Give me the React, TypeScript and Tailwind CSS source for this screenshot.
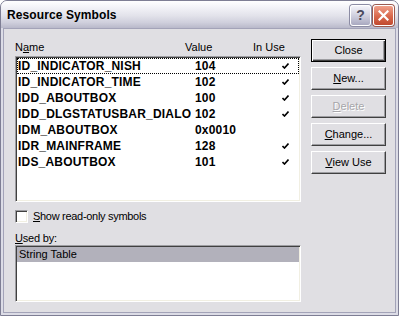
import type { ReactNode } from 'react';

type Row = { name: string; value: string; used: boolean };

const rows: Row[] = [
  { name: 'ID_INDICATOR_NISH', value: '104', used: true },
  { name: 'ID_INDICATOR_TIME', value: '102', used: true },
  { name: 'IDD_ABOUTBOX', value: '100', used: true },
  { name: 'IDD_DLGSTATUSBAR_DIALOG', value: '102', used: true },
  { name: 'IDM_ABOUTBOX', value: '0x0010', used: false },
  { name: 'IDR_MAINFRAME', value: '128', used: true },
  { name: 'IDS_ABOUTBOX', value: '101', used: true },
];

const sunken =
  'border border-t-[#9d9da1] border-l-[#9d9da1] border-r-white border-b-white shadow-[inset_1px_1px_0_#404040,inset_-1px_-1px_0_#f1efe2]';

function Check() {
  return (
    <svg width="7" height="6" viewBox="0 0 7 6" className="block">
      <path d="M0.5 3 L2.5 5 L6.5 0.5" fill="none" stroke="#000" strokeWidth="1.6" />
    </svg>
  );
}

function Key({ children }: { children: ReactNode }) {
  return <span className="underline underline-offset-[1px]">{children}</span>;
}

function Btn({ children, def, disabled }: { children: ReactNode; def?: boolean; disabled?: boolean }) {
  const frame = def
    ? 'border border-black shadow-[inset_1px_1px_0_#fff,inset_-1px_-1px_0_#404040,inset_-2px_-2px_0_#9d9da1]'
    : 'border border-t-white border-l-white border-r-[#404040] border-b-[#404040] shadow-[inset_-1px_-1px_0_#9d9da1]';
  return (
    <div
      className={`w-[75px] h-[23px] flex items-center justify-center bg-[#e0dfe3] text-[11px] ${frame} ${
        disabled ? 'text-[#a7a6aa] [text-shadow:1px_1px_0_#fff]' : 'text-black'
      }`}
    >
      <span>{children}</span>
    </div>
  );
}

function TitleBar() {
  return (
    <div className="h-[27px] flex items-center justify-between pl-[6px] pr-[4px] pt-[1px] bg-[linear-gradient(to_bottom,#ffffff_0%,#f2f2f7_25%,#e2e2ea_55%,#cfcfdc_80%,#b9b9ca_100%)]">
      <span className="text-[12px] font-bold text-black tracking-[0.1px]">Resource Symbols</span>
      <div className="flex gap-[2px]">
        <div className="w-[21px] h-[21px] rounded-[3px] border border-white shadow-[0_0_0_1px_#8c8ca4] bg-[linear-gradient(to_bottom,#f4f4fa,#c9c9d9_60%,#a9a9c0)] flex items-center justify-center">
          <span className="text-[14px] font-bold text-[#4a4a5c] leading-none">?</span>
        </div>
        <div className="w-[21px] h-[21px] rounded-[3px] border border-white shadow-[0_0_0_1px_#9a5a50] bg-[linear-gradient(to_bottom,#f0a08a,#d8684c_55%,#c04a30)] flex items-center justify-center">
          <svg width="11" height="11" viewBox="0 0 11 11">
            <path d="M1.5 1.5 L9.5 9.5 M9.5 1.5 L1.5 9.5" stroke="#fff" strokeWidth="2.2" strokeLinecap="square" />
          </svg>
        </div>
      </div>
    </div>
  );
}

export default function App() {
  return (
    <div className="w-[399px] h-[316px] bg-white font-['Liberation_Sans',Arial,sans-serif] text-black">
      <div className="w-full h-full flex flex-col rounded-t-[7px] border border-[#7e7e94] bg-[#dcdce6] overflow-hidden">
        <TitleBar />
        <div className="flex-1 px-[2px] pb-[2px]">
          <div className="h-full border border-[#a3a3b8] bg-[#e0dfe3] flex pl-[11px] pt-[10px]">
            <div className="w-[286px] flex flex-col">
              <div className="h-[17px] flex items-center text-[11px] pb-[1px]">
                <span className="w-[170px]">
                  N<Key>a</Key>me
                </span>
                <span className="w-[68px]">Value</span>
                <span>In Use</span>
              </div>
              <div className={`h-[146px] bg-white ${sunken} p-[1px]`}>
                {rows.map((r, i) => (
                  <div
                    key={r.name}
                    className={`h-[16px] flex items-center text-[12px] font-bold tracking-[0.2px] border ${
                      i === 0 ? 'border-dotted border-black' : 'border-transparent'
                    }`}
                  >
                    <span className="w-[173px] overflow-hidden whitespace-nowrap">{r.name}</span>
                    <span className="w-[87px] pl-[4px]">{r.value}</span>
                    <span className="pl-[4px]">{r.used && <Check />}</span>
                  </div>
                ))}
              </div>
              <div className="mt-[8px] h-[13px] flex items-center">
                <div className={`w-[13px] h-[13px] bg-white ${sunken}`} />
                <span className="ml-[5px] text-[11px] tracking-[-0.3px]">
                  <Key>S</Key>how read-only symbols
                </span>
              </div>
              <div className="mt-[9px] h-[13px] flex items-center text-[11px] tracking-[-0.2px]">
                <span>
                  <Key>U</Key>sed by:
                </span>
              </div>
              <div className={`h-[57px] bg-white ${sunken} p-[1px]`}>
                <div className="h-[15px] bg-[#b2b1bb] flex items-center pl-[2px] text-[11px]">String Table</div>
              </div>
            </div>
            <div className="ml-[10px] flex flex-col gap-[5px]">
              <Btn def>Close</Btn>
              <Btn>
                <Key>N</Key>ew...
              </Btn>
              <Btn disabled>
                <Key>D</Key>elete
              </Btn>
              <Btn>
                <Key>C</Key>hange...
              </Btn>
              <Btn>
                <Key>V</Key>iew Use
              </Btn>
            </div>
          </div>
        </div>
      </div>
    </div>
  );
}
